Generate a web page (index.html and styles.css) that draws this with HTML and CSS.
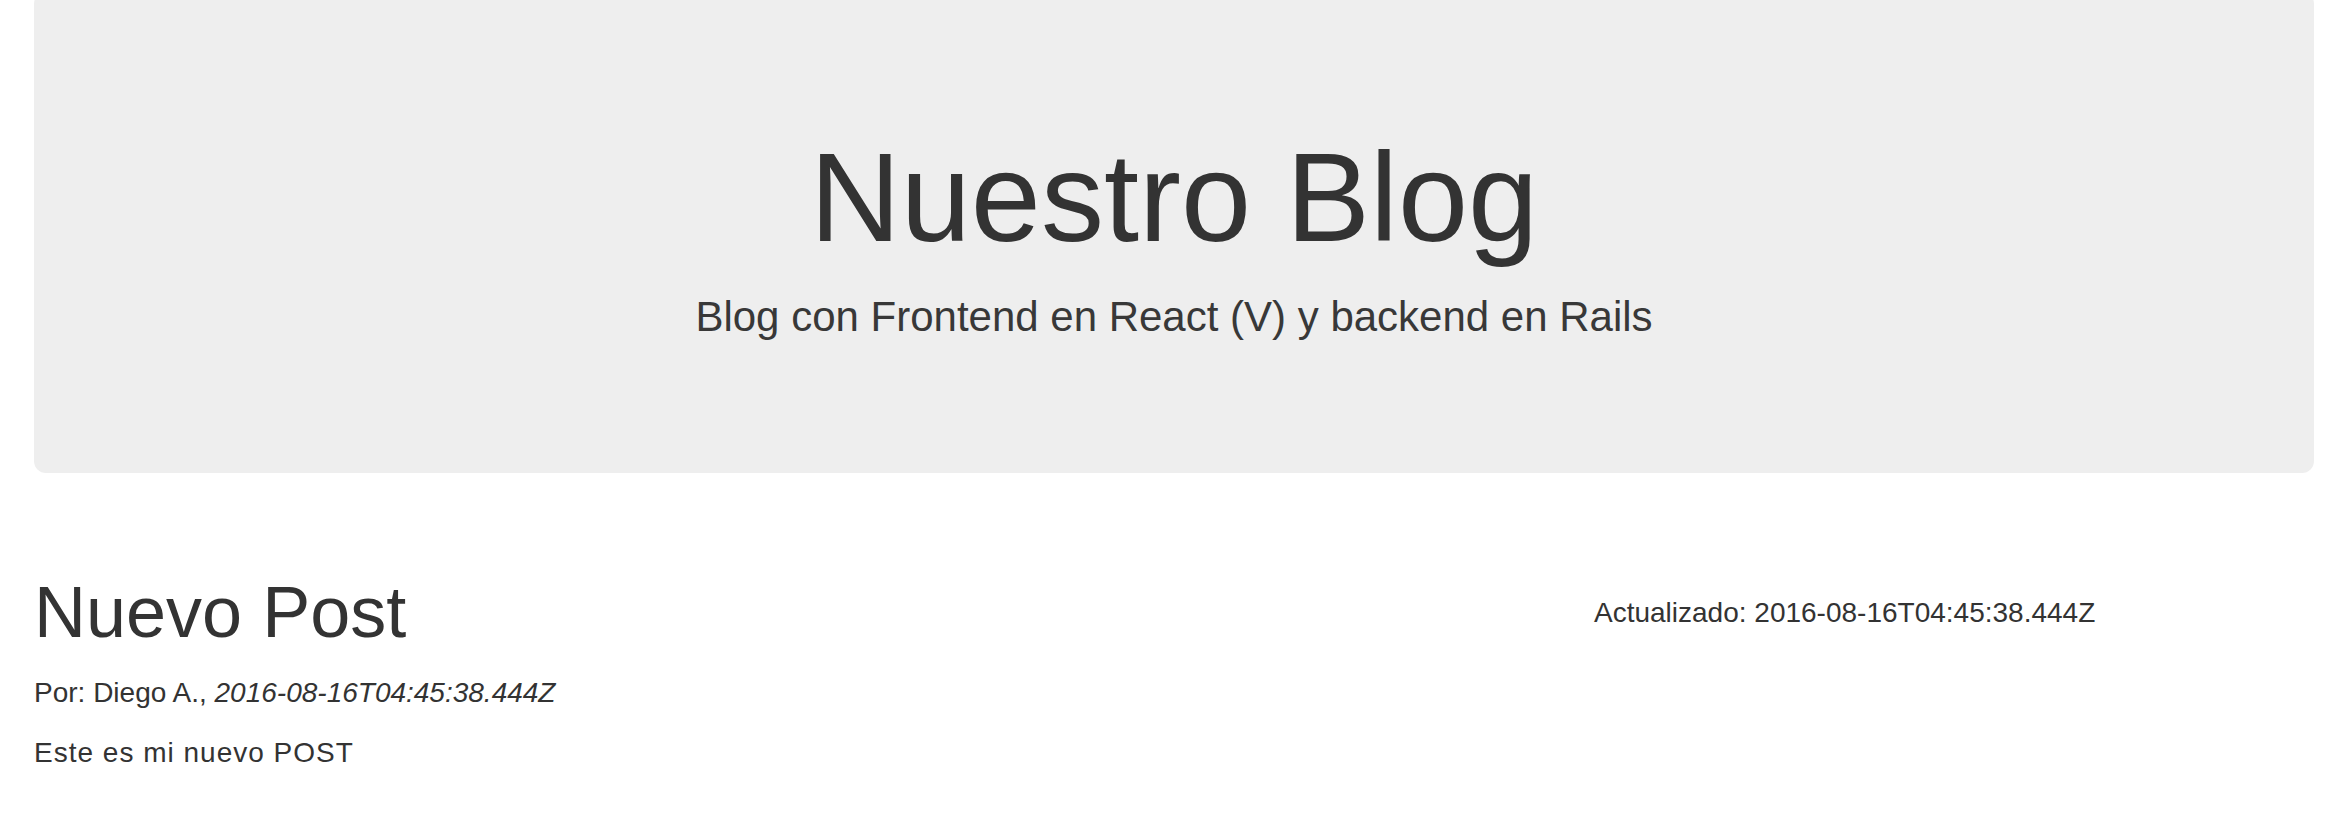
FILE: index.html
```html
<!DOCTYPE html>
<html lang="es">
<head>
<meta charset="utf-8">
<title>Nuestro Blog</title>
<link rel="stylesheet" href="styles.css">
</head>
<body>
<div class="page">
  <header class="jumbotron">
    <h1 class="title">Nuestro Blog</h1>
    <p class="lead">Blog con Frontend en React (V) y backend en Rails</p>
  </header>
  <div class="row">
    <article class="col-main">
      <h1 class="post-title">Nuevo Post</h1>
      <p class="meta">Por: Diego A., <em>2016-08-16T04:45:38.444Z</em></p>
      <p class="body">Este es mi nuevo POST</p>
    </article>
    <aside class="col-side">
      <p class="updated">Actualizado: 2016-08-16T04:45:38.444Z</p>
    </aside>
  </div>
</div>
</body>
</html>
```
FILE: styles.css
```css
html, body {
  margin: 0;
  padding: 0;
  background: #fff;
}
body {
  font-family: "Liberation Sans", Arial, sans-serif;
  color: #333;
  font-size: 28px;
  line-height: 40px;
}
.page {
  padding: 0 34px;
}
.jumbotron {
  background: #eee;
  border-radius: 12px;
  margin-top: -8px;
  padding: 137px 40px 127px;
  text-align: center;
}
.title {
  margin: 0 0 20px;
  font-size: 126px;
  font-weight: normal;
  line-height: 1.1;
}
.lead {
  margin: 0;
  font-size: 42px;
  line-height: 1.4;
  font-weight: normal;
  color: #383838;
}
.row {
  display: grid;
  grid-template-columns: 2fr 1fr;
  margin: 100px -30px 0;
}
.col-main, .col-side {
  padding: 0 30px;
}
.post-title {
  margin: 0 0 20px;
  font-size: 72px;
  font-weight: normal;
  line-height: 1.1;
}
.meta {
  margin: 0 0 20px;
}
.body {
  margin: 0;
  letter-spacing: 1px;
}
.updated {
  margin: 20px 0 0;
}
```
